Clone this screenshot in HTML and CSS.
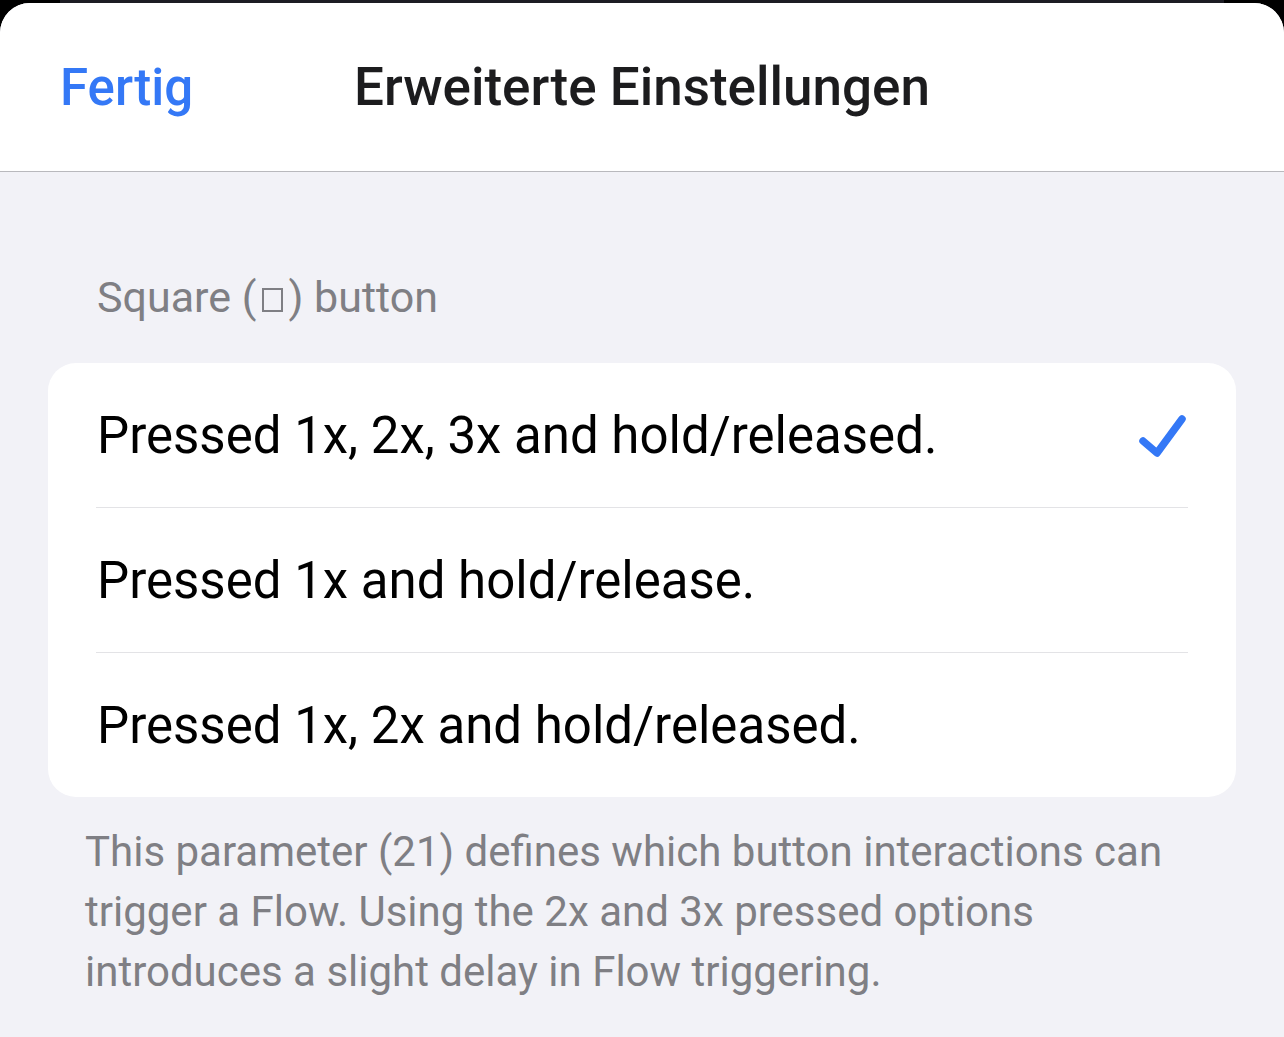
FILE: index.html
```html
<!DOCTYPE html>
<html>
  <head>
    <title>Erweiterte Einstellungen</title>
    <link rel="stylesheet" href="styles.css">
  </head>
  <body>
    <div class="top-strip"></div>
    <div class="sheet">
      <div class="nav">
        <a class="nav-done" href="#">Fertig</a>
        <h1 class="nav-title">Erweiterte Einstellungen</h1>
        <span></span>
      </div>

      <div class="content">
        <div class="section-header">Square (<span class="square-glyph"></span>) button</div>

        <div class="group">
          <div class="row selected">
            <span class="row-label">Pressed 1x, 2x, 3x and hold/released.</span>
            <svg class="check" width="52" height="52" viewBox="0 0 52 52">
              <path d="M7 32 L21 44 L46 10" fill="none" stroke="#3478f6" stroke-width="7.5" stroke-linecap="round" stroke-linejoin="round"/>
            </svg>
          </div>
          <div class="row">
            <span class="row-label">Pressed 1x and hold/release.</span>
          </div>
          <div class="row">
            <span class="row-label">Pressed 1x, 2x and hold/released.</span>
          </div>
        </div>

        <p class="section-footer">
          This parameter (21) defines which button interactions can
          trigger a Flow. Using the 2x and 3x pressed options
          introduces a slight delay in Flow triggering.
        </p>
      </div>
    </div>
  </body>
</html>
```

FILE: styles.css
```css
html,
body {
  height: 100%;
}
body {
  margin: 0;
  font-family: Roboto, "Liberation Sans", sans-serif;
  background-color: #000;
  overflow: hidden;
}
.top-strip {
  height: 3px;
  margin: 0 60px;
  background-color: #1c1c23;
}
.sheet {
  min-height: calc(100% - 3px);
  background-color: #f2f2f7;
  border-radius: 30px 30px 0 0;
  overflow: hidden;
}
.nav {
  display: grid;
  grid-template-columns: 1fr auto 1fr;
  align-items: center;
  height: 168px;
  background-color: #fff;
  border-bottom: 1px solid #b9b9bd;
}
.nav-done {
  padding-left: 60px;
  color: #3478f6;
  font-size: 51px;
  font-weight: 500;
  text-decoration: none;
}
.nav-title {
  margin: 0;
  color: #1c1c1e;
  font-size: 53px;
  font-weight: 500;
}
.content {
  padding: 0 48px;
}
.section-header {
  padding: 100px 0 0 49px;
  height: 91px;
  color: #7f7f84;
  font-size: 43px;
}
.square-glyph {
  display: inline-block;
  box-sizing: border-box;
  width: 21px;
  height: 24px;
  margin: 0 5px 0 6px;
  border: 2px solid currentColor;
  vertical-align: 0;
}
.group {
  background-color: #fff;
  border-radius: 28px;
  overflow: hidden;
}
.row {
  display: flex;
  align-items: center;
  justify-content: space-between;
  height: 144px;
  margin-left: 48px;
  margin-right: 48px;
  padding-left: 1px;
  border-bottom: 1px solid #e3e3e6;
}
.row:last-child {
  border-bottom: none;
}
.row-label {
  color: #000;
  font-size: 51px;
}
.section-footer {
  margin: 25px 0 0;
  padding-left: 37px;
  padding-right: 40px;
  color: #7f7f84;
  font-size: 42px;
  line-height: 60px;
}
```
